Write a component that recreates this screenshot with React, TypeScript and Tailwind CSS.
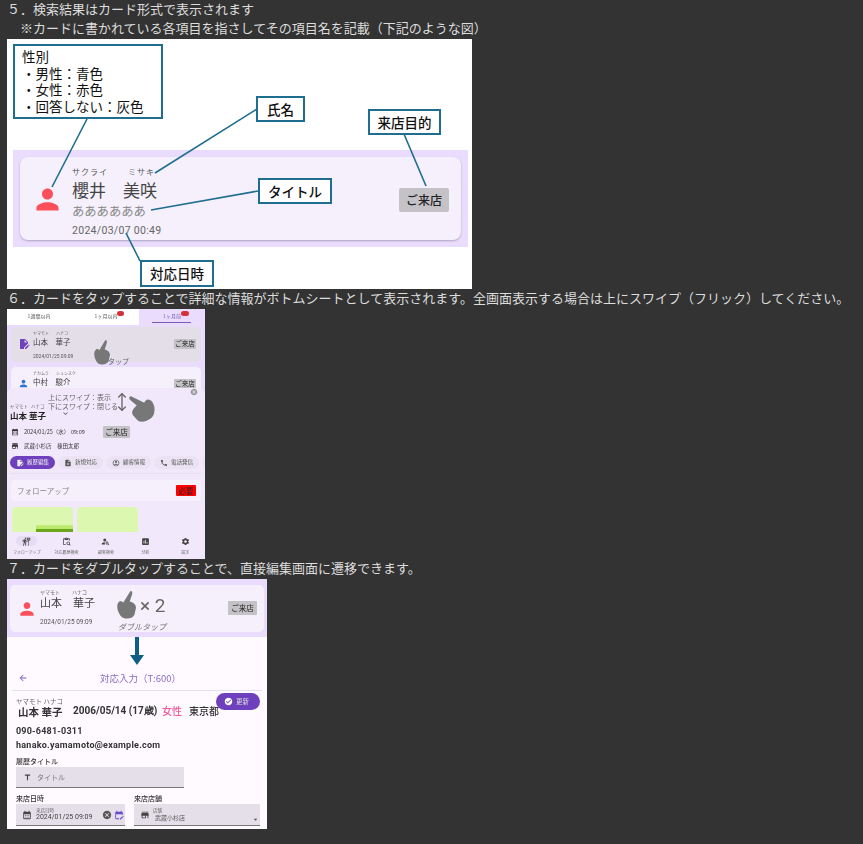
import React from "react";
import { MoveVertical } from "lucide-react";
import {
  MdPerson, MdCalendarMonth, MdStore, MdEditDocument, MdCancel, MdCheckCircle, MdPhone, MdTitle,
  MdEditCalendar, MdArrowBack, MdSettings, MdOutlineAccountCircle, MdNoteAdd, MdExpandMore,
  MdFollowTheSigns, MdPersonSearch, MdInsertChart, MdContentPasteSearch, MdArrowDropDown,
} from "react-icons/md";

const font = "font-['Noto_Sans_CJK_JP','Noto_Sans',sans-serif]";

function Callout({ className, children }: { className: string; children: React.ReactNode }) {
  return (
    <div className={`absolute flex items-center justify-center border-2 border-[#1f6d8f] bg-white text-[13.5px] font-medium text-[#111] ${className}`}>
      {children}
    </div>
  );
}

function Hand({ className }: { className: string }) {
  return (
    <svg className={`absolute ${className}`} viewBox="0 0 24 32" preserveAspectRatio="none" fill="#777777">
      <path d="M17 0 C19 0 20 2 19 4 L16 12 C20 13 24 15 24 19 L22 27 C20 31 14 32 9 31 C5 30 3 27 1 22 C0 18 0 14 3 12 C5 11 7 12 8 13 Z" />
    </svg>
  );
}

function VisitTag({ className }: { className: string }) {
  return <div className={`flex items-center justify-center bg-[#c4c2c6] text-[#222] ${className}`}>ご来店</div>;
}

function FigureOne() {
  return (
    <div className="relative h-[250px] w-[465px] bg-white pl-[6px] pt-[111px]">
      <div className="h-[97px] w-[455px] bg-[#e9dcfd] px-[7px] pt-[7px]">
        <div className="flex h-[83px] w-[441px] items-center rounded-[8px] bg-[#f5f0fc] pl-[11px] pr-[12px] shadow-[0_1px_2px_rgba(0,0,0,0.25)]">
          <MdPerson className="mt-[1px] h-[33px] w-[33px] text-[#fb4f59]" />
          <div className="ml-[8px] mt-[6px] flex flex-col text-[#555]">
            <div className="flex h-[13px] text-[8px] leading-[13px] tracking-[1px]">
              <span className="w-[56px]">サクライ</span>
              <span>ミサキ</span>
            </div>
            <div className="h-[24px] text-[17px] leading-[24px] text-[#444]">櫻井　美咲</div>
            <div className="mt-[1px] h-[16px] text-[12.3px] leading-[16px] text-[#888]">ああああああ</div>
            <div className="mt-[4px] h-[16px] font-['Roboto',sans-serif] text-[10.5px] leading-[16px] tracking-[0.3px] text-[#666]">2024/03/07 00:49</div>
          </div>
          <VisitTag className="ml-auto mt-[2px] h-[24px] w-[50px] rounded-[2px] text-[12px] font-medium" />
        </div>
      </div>
      <svg className="absolute left-0 top-0" width="465" height="250" fill="none" stroke="#1f6d8f" strokeWidth="1.6">
        <path d="M80 80 L45 148" />
        <path d="M250 70 L148 134" />
        <path d="M397 95 L419 147" />
        <path d="M251 152 L144 171" />
        <path d="M119 194 L133 222" />
      </svg>
      <div className="absolute left-[6px] top-[5px] h-[75px] w-[150px] border-2 border-[#1f6d8f] bg-white pl-[7px] pt-[2px] text-[13.5px] leading-[16.5px] text-[#111]">
        <div>性別</div>
        <div>・男性：青色</div>
        <div>・女性：赤色</div>
        <div>・回答しない：灰色</div>
      </div>
      <Callout className="left-[249px] top-[57px] h-[26px] w-[49px]">氏名</Callout>
      <Callout className="left-[361px] top-[70px] h-[26px] w-[73px]">来店目的</Callout>
      <Callout className="left-[251px] top-[139px] h-[26px] w-[74px]">タイトル</Callout>
      <Callout className="left-[133px] top-[221px] h-[27px] w-[74px]">対応日時</Callout>
    </div>
  );
}

function MiniCard({ tone, h, icon, kana1, kana2, name, date }: { tone: string; h: string; icon: React.ReactNode; kana1: string; kana2: string; name: string; date?: string }) {
  return (
    <div className={`flex w-[190px] rounded-[5px] pl-[7px] pr-[5px] pt-[3px] ${tone} ${h}`}>
      <div className="w-[15px] pt-[8px]">{icon}</div>
      <div className="flex flex-col">
        <div className="flex h-[6px] text-[4px] leading-[6px] text-[#666]">
          <span className="w-[23px]">{kana1}</span>
          <span>{kana2}</span>
        </div>
        <div className="h-[11px] text-[7.5px] leading-[11px] text-[#444]">{name}</div>
        {date && <div className="mt-[6px] font-['Roboto',sans-serif] text-[5px] leading-[7px] text-[#555]">{date}</div>}
      </div>
      <VisitTag className="ml-auto mt-[9px] h-[10px] w-[22px] rounded-[1px] text-[6.5px]" />
    </div>
  );
}

function Chip({ active, icon, label, w }: { active?: boolean; icon: React.ReactNode; label: string; w: string }) {
  return (
    <div className={`flex h-[13px] shrink-0 items-center justify-center gap-[3px] rounded-full text-[5.5px] ${w} ${active ? "bg-[#6e40bd] text-[#eee]" : "bg-[#ebe3f4] text-[#555]"}`}>
      {icon}
      <span>{label}</span>
    </div>
  );
}

function NavItem({ icon, label, pill }: { icon: React.ReactNode; label: string; pill?: boolean }) {
  return (
    <div className="flex flex-1 flex-col items-center">
      <div className={`flex h-[10px] w-[21px] items-center justify-center rounded-full text-[#444] ${pill ? "bg-[#e6dcf3]" : ""}`}>{icon}</div>
      <div className="mt-[3px] text-[4px] leading-[6px] text-[#666]">{label}</div>
    </div>
  );
}

function FigureTwo() {
  return (
    <div className="relative h-[250px] w-[198px] overflow-hidden bg-[#e9dcfd] blur-[0.45px]">
      <div className="flex h-[16px] text-[5px] leading-[11px] text-[#555]">
        <div className="flex w-[66px] justify-center bg-white pr-[2px] pt-[1px]">1週間以内</div>
        <div className="relative flex w-[66px] justify-center bg-white pt-[1px]">
          1ヶ月以内
          <span className="absolute left-[44px] top-[2px] h-[5px] w-[7px] rounded-full bg-[#d3313c]" />
        </div>
        <div className="relative flex w-[66px] justify-center pt-[1px] text-[#7a5bb5]">
          1ヶ月前
          <span className="absolute left-[42px] top-[2px] h-[5px] w-[8px] rounded-full bg-[#d3313c]" />
          <span className="absolute bottom-[2px] left-[13px] h-[1px] w-[39px] bg-[#7a5bb5]" />
        </div>
      </div>
      <div className="flex flex-col gap-[5px] px-[4px] pt-[2px]">
        <MiniCard tone="bg-[#e4dee9]" h="h-[35px]" icon={<MdEditDocument className="h-[12px] w-[12px] text-[#6e40bd]" />} kana1="ヤマモト" kana2="ハナコ" name="山本　華子" date="2024/01/25 09:09" />
        <MiniCard tone="bg-[#f5f0fc]" h="h-[30px]" icon={<MdPerson className="h-[11px] w-[11px] text-[#2f74d0]" />} kana1="ナカムラ" kana2="シュンスケ" name="中村　駿介" />
      </div>
      <Hand className="left-[87px] top-[31px] h-[25px] w-[16px]" />
      <div className="absolute left-[101px] top-[47px] text-[7px] leading-[10px] text-[#666]">タップ</div>

      <div className="absolute bottom-0 left-0 right-0 top-[79px] rounded-t-[6px] bg-[#f1e9fb]">
        <div className="flex h-[33px] flex-col justify-end pl-[3px]">
          <div className="flex gap-[3px] text-[4.5px] leading-[7px] text-[#666]"><span>ヤマモト</span><span>ハナコ</span></div>
          <div className="text-[8.5px] font-bold leading-[11px] text-[#222]">山本 華子</div>
        </div>
        <div className="mt-[4px] flex h-[14px] items-center pl-[4px] text-[5.5px] text-[#333]">
          <MdCalendarMonth className="h-[8px] w-[8px]" />
          <span className="ml-[5px] w-[47px]">2024/01/25（水）</span>
          <span className="w-[32px]">09:09</span>
          <VisitTag className="h-[12px] w-[27px] rounded-[1px] text-[7.5px]" />
        </div>
        <div className="mt-[1px] flex h-[12px] items-center pl-[4px] text-[5.5px] text-[#333]">
          <MdStore className="h-[8px] w-[8px]" />
          <span className="ml-[5px] w-[33px]">武蔵小杉店</span>
          <span>棟田太郎</span>
        </div>
        <div className="mt-[4px] flex gap-[3px] overflow-hidden pl-[3px]">
          <Chip active w="w-[45px]" icon={<MdEditDocument className="h-[8px] w-[8px]" />} label="履歴編集" />
          <Chip w="w-[45px]" icon={<MdNoteAdd className="h-[8px] w-[8px]" />} label="新規対応" />
          <Chip w="w-[45px]" icon={<MdOutlineAccountCircle className="h-[8px] w-[8px]" />} label="顧客情報" />
          <Chip w="w-[45px]" icon={<MdPhone className="h-[8px] w-[8px]" />} label="電話発信" />
          <Chip w="w-[45px]" icon={null} label="" />
        </div>
        <div className="mx-[3px] mt-[4px] h-[1px] bg-[#e6dff0]" />
        <div className="mx-[4px] mt-[6px] flex h-[21px] items-center justify-between rounded-[4px] bg-[#f5f0fc] pl-[6px] pr-[5px]">
          <span className="text-[7.5px] text-[#888]">フォローアップ</span>
          <span className="flex h-[11px] w-[20px] items-center justify-center rounded-[1px] bg-[#ff0000] text-[7.5px] text-[#222]">必要</span>
        </div>
        <div className="mt-[6px] flex gap-[4px] pl-[5px]">
          <div className="relative h-[25px] w-[61px] overflow-hidden rounded-t-[4px] bg-[#dcf8b0]">
            <div className="absolute bottom-0 right-0 h-[7px] w-[37px] bg-[linear-gradient(#c5ee7a_0%,#b8e86a_50%,#6aa51c_55%,#6aa51c_100%)]" />
          </div>
          <div className="h-[25px] w-[61px] rounded-t-[4px] bg-[#dcf8b0]" />
        </div>
        <div className="flex h-[26px] bg-[#f1e9fb] pt-[4px]">
          <NavItem pill icon={<MdFollowTheSigns className="h-[9px] w-[9px]" />} label="フォローアップ" />
          <NavItem icon={<MdContentPasteSearch className="h-[9px] w-[9px]" />} label="対応履歴検索" />
          <NavItem icon={<MdPersonSearch className="h-[9px] w-[9px]" />} label="顧客検索" />
          <NavItem icon={<MdInsertChart className="h-[9px] w-[9px]" />} label="分析" />
          <NavItem icon={<MdSettings className="h-[9px] w-[9px]" />} label="設定" />
        </div>
      </div>
      <div className="absolute left-[41px] top-[84px] text-[7px] leading-[9px] text-[#666]">
        <div>上にスワイプ：表示</div>
        <div>下にスワイプ：閉じる</div>
      </div>
      <MdExpandMore className="absolute left-[54px] top-[100px] h-[9px] w-[9px] text-[#555]" />
      <MoveVertical className="absolute left-[105px] top-[83px] h-[20px] w-[20px] text-[#666]" strokeWidth={1.6} />
      <Hand className="left-[123px] top-[83px] h-[30px] w-[24px] -scale-x-100 -rotate-[28deg]" />
      <MdCancel className="absolute left-[183px] top-[79px] h-[8px] w-[8px] text-[#999]" />
    </div>
  );
}

function Field({ className, children }: { className: string; children: React.ReactNode }) {
  return <div className={`flex shrink-0 items-center border-b border-[#777] bg-[#e5dfe9] ${className}`}>{children}</div>;
}

function FigureThree() {
  return (
    <div className="relative h-[250px] w-[260px] overflow-hidden bg-[#fefaff] blur-[0.45px]">
      <div className="h-[58px] bg-[#e9dcfd] px-[3px] pt-[6px]">
        <div className="flex h-[47px] items-start rounded-[5px] bg-[#f5f0fc] pl-[7px] pr-[7px] pt-[3px]">
          <MdPerson className="mt-[11px] h-[20px] w-[20px] text-[#fb4f59]" />
          <div className="ml-[3px] flex flex-col">
            <div className="flex h-[7px] text-[5px] leading-[7px] text-[#666]">
              <span className="w-[32px]">ヤマモト</span>
              <span>ハナコ</span>
            </div>
            <div className="h-[15px] text-[11px] leading-[15px] text-[#444]">山本　華子</div>
            <div className="mt-[8px] font-['Roboto',sans-serif] text-[6.5px] leading-[8px] text-[#555]">2024/01/25 09:09</div>
          </div>
          <VisitTag className="ml-auto mt-[13px] h-[14px] w-[29px] rounded-[1px] text-[7.5px]" />
        </div>
      </div>
      <Hand className="left-[110px] top-[12px] h-[28px] w-[19px]" />
      <div className="absolute left-[133px] top-[15px] font-['Roboto',sans-serif] text-[19px] leading-[24px] text-[#666]">× 2</div>
      <div className="absolute left-[111px] top-[42px] text-[8px] italic leading-[12px] text-[#777]">ダブルタップ</div>
      <svg className="absolute left-[122px] top-[58px]" width="16" height="29" viewBox="0 0 16 29">
        <path d="M6 0 H10 V18 H15 L8 28 L1 18 H6 Z" fill="#0f5f85" />
      </svg>
      <div className="relative mx-[5px] mt-[29px] flex h-[25px] items-center justify-center border-b border-[#e6dff0] text-[9.5px] text-[#8a6cc6]">
        <MdArrowBack className="absolute left-[6px] top-[7px] h-[10px] w-[10px] text-[#7a5bc5]" />
        <span className="ml-[7px]">対応入力（T:600）</span>
      </div>
      <div className="px-[9px] pt-[4px]">
        <div className="relative flex h-[24px] items-end text-[11px] font-bold text-[#333]">
          <div className="w-[57px]">
            <div className="text-[6.5px] font-normal leading-[8px] text-[#666]">ヤマモト ハナコ</div>
            <div className="pl-[2px] text-[10.5px] leading-[14px]">山本 華子</div>
          </div>
          <div className="mb-[1px] w-[89px] font-['Roboto',sans-serif] text-[10px] leading-[14px]">2006/05/14 (17歳)</div>
          <div className="mb-[1px] w-[27px] text-[10px] font-medium leading-[14px] text-[#f2569b]">女性</div>
          <div className="mb-[1px] text-[10px] font-medium leading-[14px]">東京都</div>
          <div className="absolute right-[-2px] top-[-2px] flex h-[17px] w-[44px] items-center gap-[3px] rounded-full bg-[#6e40bd] pl-[8px] text-[6.5px] font-normal text-[#ddd]">
            <MdCheckCircle className="h-[9px] w-[9px] text-white" />
            <span>更新</span>
          </div>
        </div>
        <div className="mt-[5px] font-['Roboto',sans-serif] text-[9px] font-bold leading-[14px] tracking-[0.2px] text-[#333]">090-6481-0311</div>
        <div className="font-['Roboto',sans-serif] text-[9px] font-bold leading-[14px] tracking-[0.25px] text-[#333]">hanako.yamamoto@example.com</div>
        <div className="mt-[4px] h-[11px] text-[7px] font-medium leading-[11px] text-[#333]">履歴タイトル</div>
        <Field className="h-[21px] w-[168px] pl-[7px]">
          <MdTitle className="h-[9px] w-[9px] text-[#444]" />
          <span className="ml-[5px] text-[7px] text-[#777]">タイトル</span>
        </Field>
        <div className="mt-[6px] flex h-[9px] text-[7px] font-medium leading-[9px] text-[#333]">
          <span className="w-[118px]">来店日時</span>
          <span>来店店舗</span>
        </div>
        <div className="mt-[1px] flex gap-[9px]">
          <Field className="h-[22px] w-[109px] pl-[6px] pr-[1px]">
            <MdCalendarMonth className="h-[10px] w-[10px] shrink-0 text-[#444]" />
            <div className="ml-[4px] flex flex-col">
              <span className="text-[4.5px] leading-[6px] text-[#666]">来店日時</span>
              <span className="font-['Roboto',sans-serif] text-[7px] leading-[9px] text-[#444]">2024/01/25 09:09</span>
            </div>
            <MdCancel className="ml-auto h-[10px] w-[10px] text-[#555]" />
            <MdEditCalendar className="ml-[2px] h-[10px] w-[10px] text-[#6a4ad0]" />
          </Field>
          <Field className="relative h-[22px] w-[126px] pl-[6px]">
            <MdStore className="h-[10px] w-[10px] text-[#444]" />
            <div className="ml-[3px] flex flex-col">
              <span className="text-[4.5px] leading-[6px] text-[#666]">店舗</span>
              <span className="ml-[2px] text-[6px] leading-[9px] text-[#555]">武蔵小杉店</span>
            </div>
            <MdArrowDropDown className="absolute right-[0px] top-[11px] h-[9px] w-[9px] text-[#555]" />
          </Field>
        </div>
      </div>
    </div>
  );
}

export default function App() {
  return (
    <div className={`min-h-[844px] bg-[#333333] pl-[7px] text-[13px] text-[#dddddd] ${font}`}>
      <div className="h-[19px] leading-[18px]">５．検索結果はカード形式で表示されます</div>
      <div className="h-[20px] leading-[18px]">　※カードに書かれている各項目を指さしてその項目名を記載（下記のような図）</div>
      <FigureOne />
      <div className="h-[20px] leading-[18px]">６．カードをタップすることで詳細な情報がボトムシートとして表示されます。全画面表示する場合は上にスワイプ（フリック）してください。</div>
      <FigureTwo />
      <div className="h-[20px] leading-[18px]">７．カードをダブルタップすることで、直接編集画面に遷移できます。</div>
      <FigureThree />
    </div>
  );
}
